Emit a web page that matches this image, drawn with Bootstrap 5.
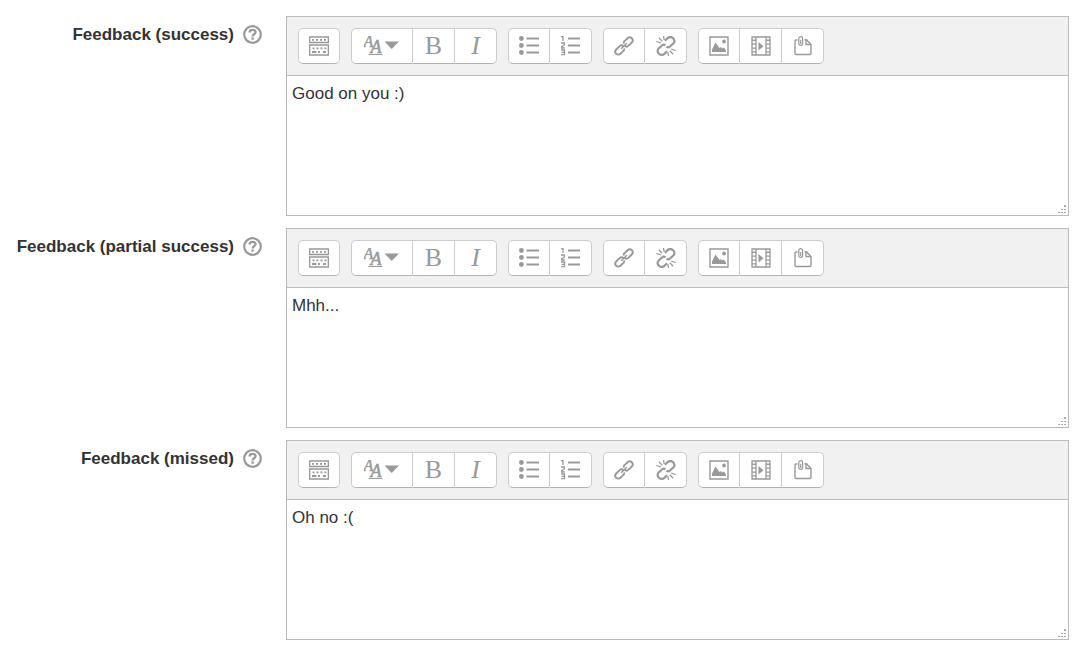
<!DOCTYPE html>
<html lang="en">
<head>
<meta charset="utf-8">
<meta name="viewport" content="width=device-width, initial-scale=1">
<title>Feedback settings</title>
<link href="https://cdn.jsdelivr.net/npm/bootstrap@5.3.0/dist/css/bootstrap.min.css" rel="stylesheet">
<style>
  body { font-family: "Liberation Sans", Arial, sans-serif; font-size: 17px; line-height: 24px; color: #333; background: #fff; }
  .feedback-form { padding: 16px 14px 11px 0; gap: 12px; }
  .field-row { gap: 24px; }
  .field-label { flex: 0 0 262px; padding-top: 7px; gap: 9px; }
  .field-label label { font-weight: bold; }
  .help-link, .editor .btn { color: #999; }
  .help-link { line-height: 0; padding-top: 2px; }
  .editor { border: 1px solid #bbb; min-width: 0; }
  .editor-toolbar { background: #f1f1f1; border-bottom: 1px solid #bbb; padding: 11px; gap: 11px; }
  .editor .btn {
    width: 42px; height: 36px; padding: 0; background: #fff; border: 1px solid #ccc; border-bottom-color: #b3b3b3;
    border-radius: 5px; display: flex; align-items: center; justify-content: center; flex: none;
  }
  .editor .btn:hover { background: #f7f7f7; }
  .editor .btn-group > .btn + .btn { margin-left: 0; border-left-width: 0; }
  .editor .btn.style-menu { width: 62px; }
  .editor .glyph { font-family: "Liberation Serif", "Times New Roman", serif; font-size: 26px; line-height: 34px; }
  .editor textarea {
    display: block; height: 139px; border: 0; border-radius: 0; padding: 6px 5px; font-size: 17px; line-height: 24px;
    color: #333; resize: vertical;
  }
  .editor textarea::-webkit-resizer {
    background: url("data:image/svg+xml,%3Csvg xmlns='http://www.w3.org/2000/svg' width='15' height='15'%3E%3Cpath fill='%23aaa' d='M11 5h2v2h-2zM8 9h2v1h-2zM11 9h2v1h-2zM5 12h2v1h-2zM8 12h2v1h-2zM11 12h2v1h-2z'/%3E%3C/svg%3E") no-repeat;
  }
  svg { display: block; }
</style>
</head>
<body>
<svg class="d-none" aria-hidden="true">
  <symbol id="i-help" viewBox="0 0 19 19">
    <circle cx="9.5" cy="9.5" r="8.3" fill="none" stroke="currentColor" stroke-width="2.2"/>
    <path d="M6.500 7.600C6.500 5.600 8 4.900 9.500 4.900S12.600 5.800 12.600 7.300C12.600 9 9.600 9.100 9.600 11.500" fill="none" stroke="currentColor" stroke-width="2.300"/>
    <path d="M8.400 12.500h2.400v2.200H8.400z" fill="currentColor"/>
  </symbol>
  <symbol id="i-toggle" viewBox="0 0 20 20">
    <path d="M.5 1h19v5.500H.5zM.5 9h19v10H.5z" fill="none" stroke="currentColor" stroke-width="1.600"/>
    <path d="M3 3.800h14M3.500 12.300h14" stroke="currentColor" stroke-width="1.800" stroke-dasharray="2 2"/>
    <path d="M3 16h4.500M9 16h2M14 16h3" stroke="currentColor" stroke-width="1.800"/>
  </symbol>
  <symbol id="i-styles" viewBox="1.500 0 36 20">
    <g fill="currentColor" stroke="currentColor" stroke-width=".5" font-family="Liberation Serif, serif" font-style="italic">
      <text x="1" y="11" font-size="16">A</text><text x="8" y="17" font-size="18">A</text>
    </g>
    <path d="M6 18.500h14" stroke="currentColor"/>
    <path d="M22 5.500h14.500L29.200 13z" fill="currentColor"/>
  </symbol>
  <symbol id="i-ul" viewBox="0 0 20 20">
    <g fill="currentColor"><circle cx="2.400" cy="2.500" r="2.400"/><circle cx="2.400" cy="9.500" r="2.400"/><circle cx="2.400" cy="16.500" r="2.400"/></g>
    <path d="M7.500 2.500H20M7.500 9.500H20M7.500 16.500H20" stroke="currentColor" stroke-width="2.200"/>
  </symbol>
  <symbol id="i-ol" viewBox="1 0 20 20">
    <path d="M8 2.500h12M8 9.500h12M8 16.500h12" stroke="currentColor" stroke-width="2.200"/>
    <path d="M1 .7h2V5M1 7h3.300v2L1.300 11.200v.8h3.500M1 14h3.500v4.700H1M1.500 16.300h3" fill="none" stroke="currentColor" stroke-width="1.300"/>
  </symbol>
  <symbol id="i-link" viewBox="0 0 20 20">
    <g transform="rotate(-45 10 10)" fill="none" stroke="currentColor" stroke-width="1.900">
      <path d="M8.500 11.800a3 3 0 0 1-2 1.200H2a3 3 0 0 1-3-3 3 3 0 0 1 3-3h4.500a3 3 0 0 1 3 3"/>
      <path d="M11.500 8.200a3 3 0 0 1 2-1.200H18a3 3 0 0 1 3 3 3 3 0 0 1-3 3h-4.500a3 3 0 0 1-3-3"/>
      <path d="M6 10h8" stroke-width="1.500"/>
    </g>
  </symbol>
  <symbol id="i-unlink" viewBox="0 0 20 20">
    <g fill="none" stroke="currentColor" stroke-width="2.200">
      <path d="M9 4.700l2.300-2.300C13 .8 15 .7 16.600 1.800c2.200 1.500 2.300 4 .7 5.700L14 10.500c-1 1-2.300 1-3.500.3"/>
      <path d="M11 15.300l-2.300 2.300C7 19.200 5 19.300 3.400 18.200c-2.200-1.500-2.300-4-.7-5.700L6 9.500c1-1 2.300-1 3.500-.3"/>
    </g>
    <path d="M.3 5.500l4.500 1.300M2.800 1.800l3.400 3.400M7.500 0l.7 3.800M19.700 14.500l-4.500-1.300M17.200 18.200l-3.400-3.400M12.500 20l-.7-3.800" stroke="currentColor" stroke-width="1.300"/>
  </symbol>
  <symbol id="i-image" viewBox="0 0 20 20">
    <path d="M1 1h18v18H1z" fill="none" stroke="currentColor" stroke-width="1.400"/>
    <path d="M3 16V13.500L6.500 6.500l4 5.500 1.500-1 1 1.500 2-1 2 3V16z" fill="currentColor"/>
    <circle cx="15" cy="5.500" r="1.900" fill="currentColor"/>
  </symbol>
  <symbol id="i-media" viewBox="0 0 20 20">
    <path d="M1 1h18v18H1zM5 1v18M15 1v18" fill="none" stroke="currentColor" stroke-width="1.300"/>
    <path d="M3 1v18M17 1v18" stroke="currentColor" stroke-width="4" stroke-dasharray="1.300 2.600" stroke-dashoffset="-2.600"/>
    <path d="M7.500 6v8.500l5-4.200z" fill="currentColor"/>
  </symbol>
  <symbol id="i-files" viewBox="0 0 20 20">
    <g fill="none" stroke="currentColor" stroke-width="1.400">
      <path d="M4.500 4H3a1 1 0 0 0-1 1v12.500a1 1 0 0 0 1 1h14a1 1 0 0 0 1-1V8.500L13.500 3.700H11.500"/>
      <path d="M13 3.700v4.800h5"/>
      <path d="M5.800 5V7.500a1.900 1.900 0 0 0 3.800 0V2.500a1.900 1.900 0 0 0-3.800 0V5M7.700 4v4" stroke-width="1.200"/>
    </g>
  </symbol>
</svg>

<form class="feedback-form d-flex flex-column" id="feedbackForm"></form>

<template id="fieldTemplate">
  <div class="field-row d-flex">
    <div class="field-label d-flex justify-content-end align-items-start">
      <label></label>
      <a class="help-link" href="#"><svg width="19" height="19"><use href="#i-help"/></svg></a>
    </div>
    <div class="editor flex-grow-1">
      <div class="editor-toolbar d-flex flex-wrap" role="toolbar">
        <div class="btn-group">
          <button type="button" class="btn" aria-label="Show more buttons"><svg width="20" height="20"><use href="#i-toggle"/></svg></button>
        </div>
        <div class="btn-group">
          <button type="button" class="btn style-menu" aria-label="Paragraph styles"><svg width="36" height="20"><use href="#i-styles"/></svg></button>
          <button type="button" class="btn glyph" aria-label="Bold">B</button>
          <button type="button" class="btn glyph fst-italic" aria-label="Italic">I</button>
        </div>
        <div class="btn-group">
          <button type="button" class="btn" aria-label="Unordered list"><svg width="20" height="20"><use href="#i-ul"/></svg></button>
          <button type="button" class="btn" aria-label="Ordered list"><svg width="20" height="20"><use href="#i-ol"/></svg></button>
        </div>
        <div class="btn-group">
          <button type="button" class="btn" aria-label="Link"><svg width="20" height="20"><use href="#i-link"/></svg></button>
          <button type="button" class="btn" aria-label="Unlink"><svg width="20" height="20"><use href="#i-unlink"/></svg></button>
        </div>
        <div class="btn-group">
          <button type="button" class="btn" aria-label="Image"><svg width="20" height="20"><use href="#i-image"/></svg></button>
          <button type="button" class="btn" aria-label="Media"><svg width="20" height="20"><use href="#i-media"/></svg></button>
          <button type="button" class="btn" aria-label="Manage files"><svg width="20" height="20"><use href="#i-files"/></svg></button>
        </div>
      </div>
      <textarea class="form-control"></textarea>
    </div>
  </div>
</template>

<script src="https://cdn.jsdelivr.net/npm/bootstrap@5.3.0/dist/js/bootstrap.bundle.min.js"></script>
<script>
  const fields = [
    { id: 'success', label: 'Feedback (success)', text: 'Good on you :)' },
    { id: 'partial', label: 'Feedback (partial success)', text: 'Mhh...' },
    { id: 'missed', label: 'Feedback (missed)', text: 'Oh no :(' }
  ];
  for (const f of fields) {
    const row = document.getElementById('fieldTemplate').content.cloneNode(true);
    const label = row.querySelector('label');
    label.textContent = f.label;
    label.htmlFor = f.id;
    row.querySelector('.help-link').setAttribute('aria-label', 'Help with ' + f.label);
    const area = row.querySelector('textarea');
    area.id = f.id;
    area.value = f.text;
    document.getElementById('feedbackForm').append(row);
  }
</script>
</body>
</html>
